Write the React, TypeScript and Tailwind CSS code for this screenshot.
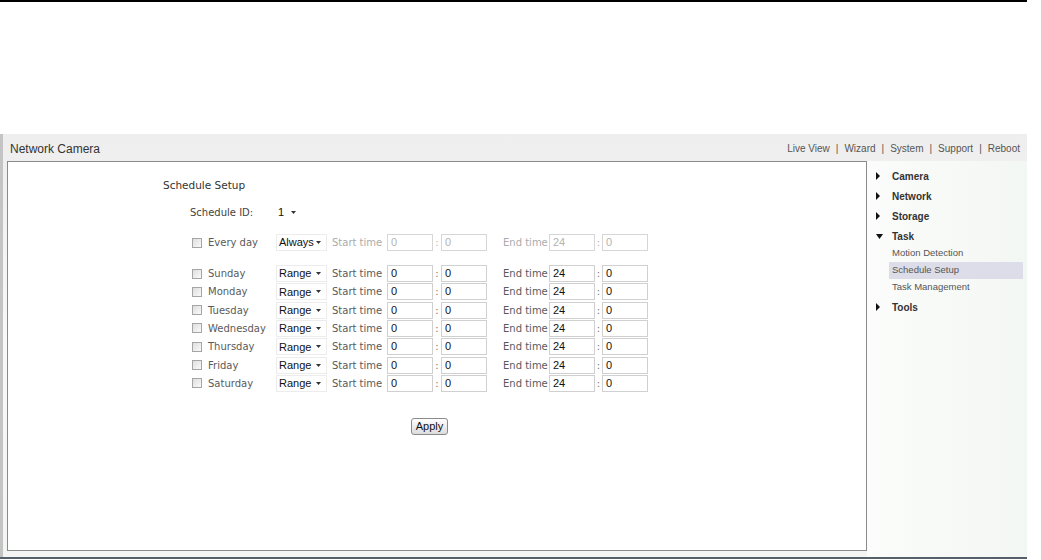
import React from 'react';

const days = ['Sunday', 'Monday', 'Tuesday', 'Wednesday', 'Thursday', 'Friday', 'Saturday'];

const Arrow = () => (
  <svg width="5" height="3" viewBox="0 0 5 3" className="shrink-0">
    <path d="M0 0h5L2.5 3z" fill="#333" />
  </svg>
);

const Box = ({ value, disabled }: { value: string; disabled?: boolean }) => (
  <div
    className={
      disabled
        ? 'w-[46px] h-[17px] border border-[#d6d6d6] bg-white pl-[3px] text-[11px] leading-[15px] text-[#b4b4b4]'
        : 'w-[46px] h-[17px] border border-[#d0d0d0] bg-white pl-[3px] text-[11px] leading-[15px] text-[#111]'
    }
    style={{ fontFamily: '"Liberation Sans", Arial, sans-serif' }}
  >
    {value}
  </div>
);

const Check = () => (
  <div className="w-[10px] h-[10px] ml-[2px] border border-[#a5a5a5] bg-gradient-to-br from-[#dedede] to-[#fafafa] shrink-0" />
);

const Select = ({ value }: { value: string }) => (
  <div
    className="w-[51px] h-[17px] border border-[#ececec] bg-white flex items-center justify-between pl-[2px] pr-[5px] text-[11px] text-[#111]"
    style={{ fontFamily: '"Liberation Sans", Arial, sans-serif' }}
  >
    <span>{value}</span>
    <Arrow />
  </div>
);

const Row = ({ label, mode, start, end, disabled }: { label: string; mode: string; start: string; end: string; disabled?: boolean }) => (
  <div className="flex items-center h-[17px] ml-[182px]">
    <div className="w-[18px] flex items-center">
      <Check />
    </div>
    <div className="w-[68px] text-[#5a5a5a]">{label}</div>
    <Select value={mode} />
    <div className={disabled ? 'w-[60px] pl-[5px] text-[#ababab]' : 'w-[60px] pl-[5px] text-[#5a5a5a]'}>Start time</div>
    <Box value={start} disabled={disabled} />
    <div className={disabled ? 'w-[8px] text-center text-[#b4b4b4]' : 'w-[8px] text-center text-[#777]'}>:</div>
    <Box value="0" disabled={disabled} />
    <div className={disabled ? 'w-[62px] pl-[16px] text-[#ababab]' : 'w-[62px] pl-[16px] text-[#5a5a5a]'}>End time</div>
    <Box value={end} disabled={disabled} />
    <div className={disabled ? 'w-[7px] text-center text-[#b4b4b4]' : 'w-[7px] text-center text-[#777]'}>:</div>
    <Box value="0" disabled={disabled} />
  </div>
);

const Tri = ({ down }: { down?: boolean }) =>
  down ? (
    <svg width="7" height="5" viewBox="0 0 7 5">
      <path d="M0 0h7L3.5 5z" fill="#111" />
    </svg>
  ) : (
    <svg width="4" height="8" viewBox="0 0 4 8">
      <path d="M0 0l4 4-4 4z" fill="#111" />
    </svg>
  );

const NavHead = ({ label, down }: { label: string; down?: boolean }) => (
  <div className="flex items-center h-[20px]">
    <div className="w-[25px] pl-[9px] flex items-center">
      <Tri down={down} />
    </div>
    <span className="font-bold text-[10px] text-[#333]">{label}</span>
  </div>
);

const NavSub = ({ label, active }: { label: string; active?: boolean }) => (
  <div className={active ? 'h-[17px] ml-[22px] mr-[4px] pl-[3px] flex items-center text-[9.5px] text-[#555] bg-[#dcdde8]' : 'h-[17px] ml-[22px] mr-[4px] pl-[3px] flex items-center text-[9.5px] text-[#555]'}>
    {label}
  </div>
);

export default function App() {
  return (
    <div className="w-[1041px] h-[560px] bg-white overflow-hidden">
      <div className="w-[1027px] h-[2px] bg-black" />
      <div className="mt-[132px] w-[1027px] h-[423px] flex flex-col border-l-[3px] border-[#c4c4c4] bg-gradient-to-b from-[#eeeeee] via-[#f7f8f7] to-[#f3f5f3]">
        <div className="h-[27px] flex justify-between" style={{ fontFamily: '"Liberation Sans", Arial, sans-serif' }}>
          <div className="self-end pb-[3px] pl-[7px] text-[12px] text-[#333]">Network Camera</div>
          <div className="pt-[7px] pr-[7px] text-[10px] text-[#555] flex gap-[6px]">
            <span>Live View</span>
            <span>|</span>
            <span>Wizard</span>
            <span>|</span>
            <span>System</span>
            <span>|</span>
            <span>Support</span>
            <span>|</span>
            <span>Reboot</span>
          </div>
        </div>
        <div className="flex flex-1">
          <div
            className="ml-[4px] w-[860px] h-[390px] border border-[#8a8a8a] bg-white flex flex-col text-[10px]"
            style={{ fontFamily: '"DejaVu Sans", Verdana, sans-serif' }}
          >
            <div className="mt-[16px] ml-[155px] h-[14px] leading-[14px] text-[10.5px] text-[#333]">Schedule Setup</div>
            <div className="mt-[12px] h-[16px] flex items-center ml-[182px]">
              <div className="w-[86px] text-[#444]">Schedule ID:</div>
              <div
                className="w-[22px] h-[16px] flex items-center justify-between pl-[2px] pr-[2px] text-[11px] text-[#111]"
                style={{ fontFamily: '"Liberation Sans", Arial, sans-serif' }}
              >
                <span>1</span>
                <Arrow />
              </div>
            </div>
            <div className="mt-[14px]">
              <Row label="Every day" mode="Always" start="0" end="24" disabled />
            </div>
            <div className="mt-[14px] flex flex-col gap-[1.33px]">
              {days.map((d) => (
                <Row key={d} label={d} mode="Range" start="0" end="24" />
              ))}
            </div>
            <div className="mt-[26px] ml-[403px]">
              <button
                className="w-[37px] h-[17px] rounded-[3px] border border-[#8a8a8a] bg-gradient-to-b from-white to-[#dcdcdc] text-[11px] leading-[15px] text-[#111]"
                style={{ fontFamily: '"Liberation Sans", Arial, sans-serif' }}
              >
                Apply
              </button>
            </div>
          </div>
          <div className="flex-1 pt-[5px] bg-gradient-to-r from-[#fbfcfb] to-[#f3f7f3]" style={{ fontFamily: '"Liberation Sans", Arial, sans-serif' }}>
            <NavHead label="Camera" />
            <NavHead label="Network" />
            <NavHead label="Storage" />
            <NavHead label="Task" down />
            <div className="-mt-[1px]">
              <NavSub label="Motion Detection" />
              <NavSub label="Schedule Setup" active />
              <NavSub label="Task Management" />
            </div>
            <div className="mt-[1px]">
              <NavHead label="Tools" />
            </div>
          </div>
        </div>
      </div>
      <div className="w-[1027px] h-[2px] bg-[#55606a]" />
    </div>
  );
}
